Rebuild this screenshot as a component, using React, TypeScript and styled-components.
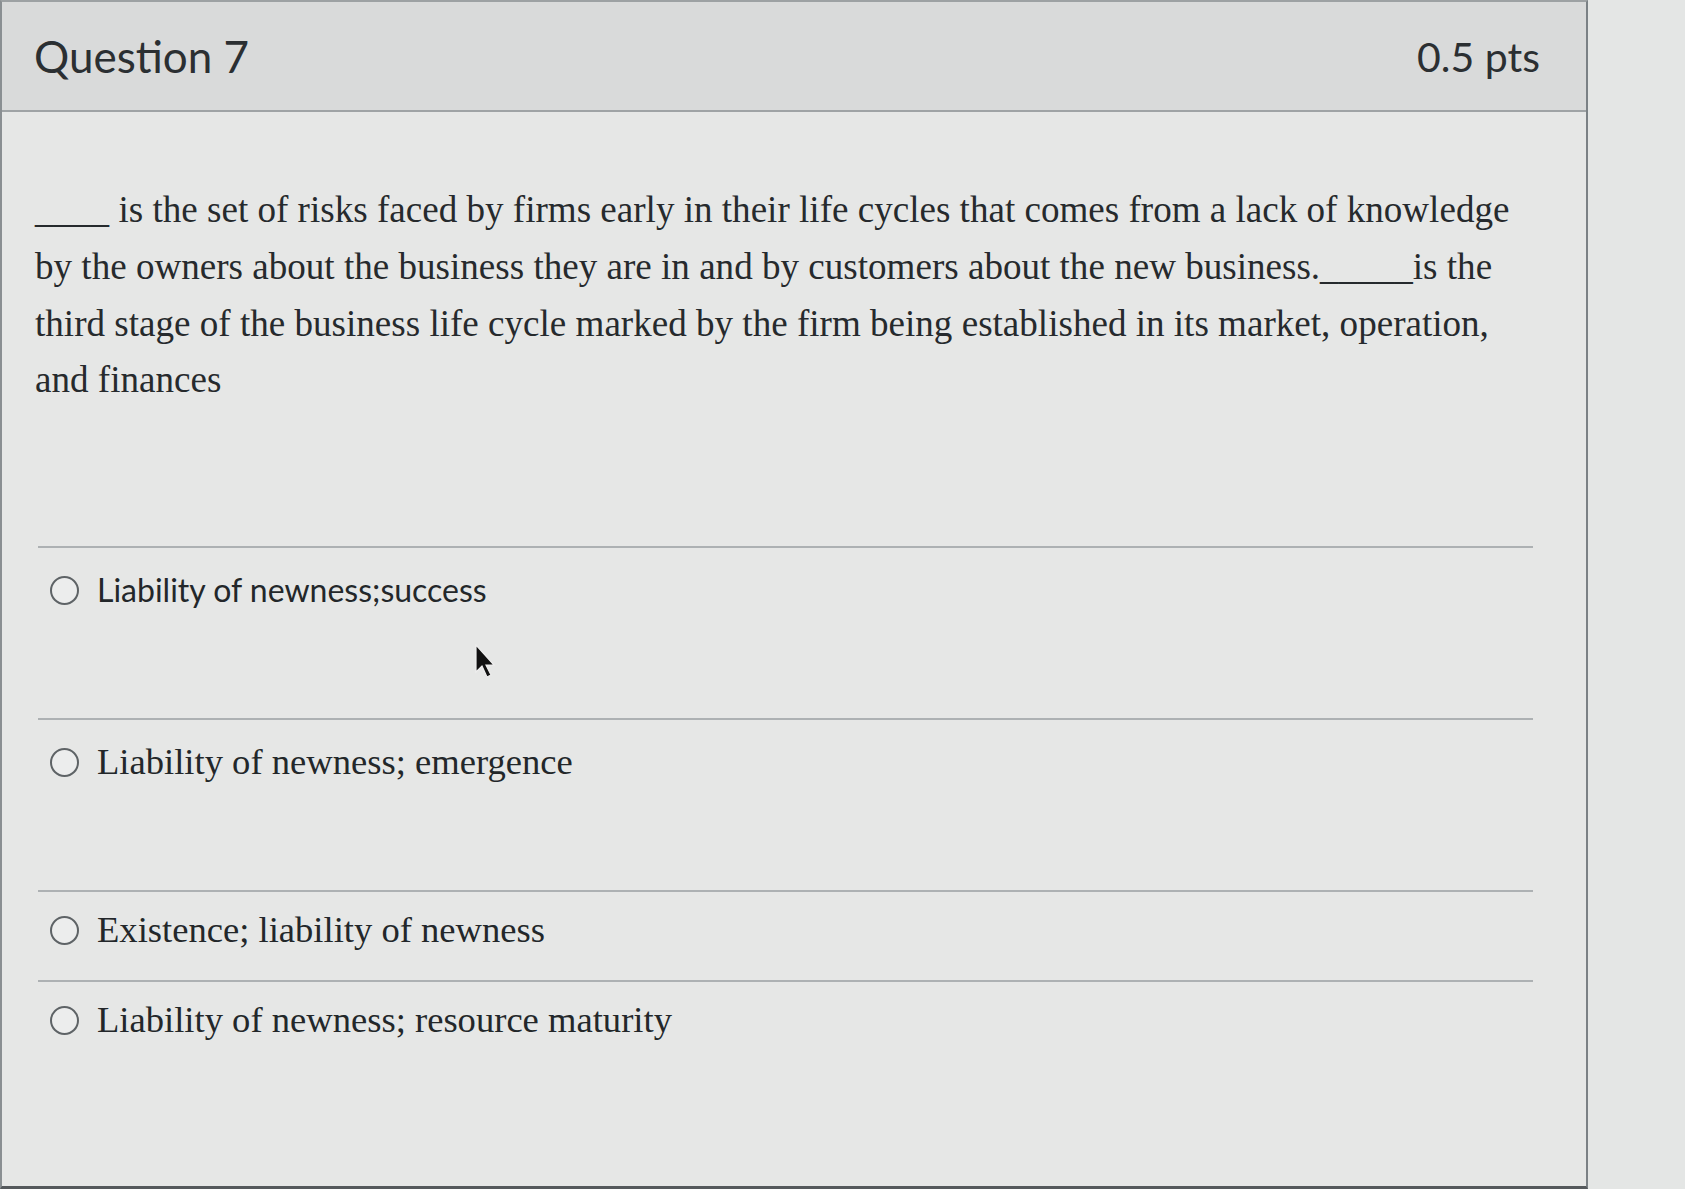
import React from "react";
import styled, { createGlobalStyle } from "styled-components";

const Global = createGlobalStyle`
  html, body { margin: 0; padding: 0; background: #e3e5e4; }
  body { font-family: "Liberation Serif", "Times New Roman", serif; color: #262a2d; }
  #root { min-height: 100vh; }
`;

const Page = styled.div`
  position: relative;
  display: flex;
  min-height: 1189px;
  background: #e3e5e4;
  overflow: hidden;
`;

const Card = styled.section`
  width: 1588px;
  flex: 0 0 1588px;
  box-sizing: border-box;
  background: #e6e7e6;
  border-top: 2px solid #9da1a3;
  border-left: 2px solid #8a8f92;
  border-right: 2px solid #7b8185;
  border-bottom: 3px solid #55595c;
  display: flex;
  flex-direction: column;
`;

const Header = styled.header`
  height: 110px;
  box-sizing: border-box;
  display: flex;
  align-items: center;
  justify-content: space-between;
  padding: 0 46px 0 32px;
  background: #d9dada;
  border-bottom: 2px solid #9fa3a5;
  font-family: Lato, "Open Sans", sans-serif;
  color: #2b2f32;
`;

const Title = styled.h2`
  margin: 0;
  font-weight: 400;
  font-size: 44px;
`;

const Points = styled.span`
  font-weight: 400;
  font-size: 41px;
`;

const Body = styled.div`
  padding: 70px 51px 0 33px;
`;

const QuestionText = styled.p`
  margin: 0;
  font-size: 37.1px;
  line-height: 56.8px;
`;

const Answers = styled.div`
  margin-top: 137px;
  margin-left: 3px;
  margin-right: 2px;
  display: flex;
  flex-direction: column;
`;

const AnswerRow = styled.label<{ $tall?: boolean }>`
  display: flex;
  align-items: center;
  gap: 18px;
  border-top: 2px solid #adb1b3;
  padding: ${(p) => (p.$tall ? "19px 0 105px 12px" : "15px 0 27px 12px")};
`;

const Radio = styled.span`
  width: 29px;
  height: 29px;
  flex: 0 0 29px;
  border-radius: 50%;
  border: 2px solid #5e6366;
  background: #eceded;
  box-sizing: border-box;
`;

const AnswerText = styled.span<{ $sans?: boolean }>`
  font-family: ${(p) =>
    p.$sans ? 'Lato, "Open Sans", sans-serif' : '"Liberation Serif", "Times New Roman", serif'};
  font-size: ${(p) => (p.$sans ? "32px" : "36.6px")};
  line-height: 46px;
  color: #23272a;
`;

const Side = styled.div`
  flex: 1;
  background: #e4e6e5;
`;

const Cursor = styled.svg`
  position: absolute;
  left: 474px;
  top: 644px;
  width: 22px;
  height: 36px;
`;

const answers = [
  { text: "Liability of newness;success", sans: true, tall: true },
  { text: "Liability of newness; emergence", sans: false, tall: true },
  { text: "Existence; liability of newness", sans: false, tall: false },
  { text: "Liability of newness; resource maturity", sans: false, tall: false },
];

export default function App() {
  return (
    <>
      <Global />
      <Page>
        <Card>
          <Header>
            <Title>Question 7</Title>
            <Points>0.5 pts</Points>
          </Header>
          <Body>
            <QuestionText>
              ____ is the set of risks faced by firms early in their life cycles that comes from a
              lack of knowledge by the owners about the business they are in and by customers about
              the new business._____is the third stage of the business life cycle marked by the
              firm being established in its market, operation, and finances
            </QuestionText>
            <Answers>
              {answers.map((a) => (
                <AnswerRow key={a.text} $tall={a.tall}>
                  <Radio />
                  <AnswerText $sans={a.sans}>{a.text}</AnswerText>
                </AnswerRow>
              ))}
            </Answers>
          </Body>
        </Card>
        <Side />
        <Cursor viewBox="0 0 22 36">
          <path d="M2 1 L2 28 L8 22 L13 33 L17 31 L12 21 L20 21 Z" fill="#111" stroke="#eee" strokeWidth="1.2" />
        </Cursor>
      </Page>
    </>
  );
}
